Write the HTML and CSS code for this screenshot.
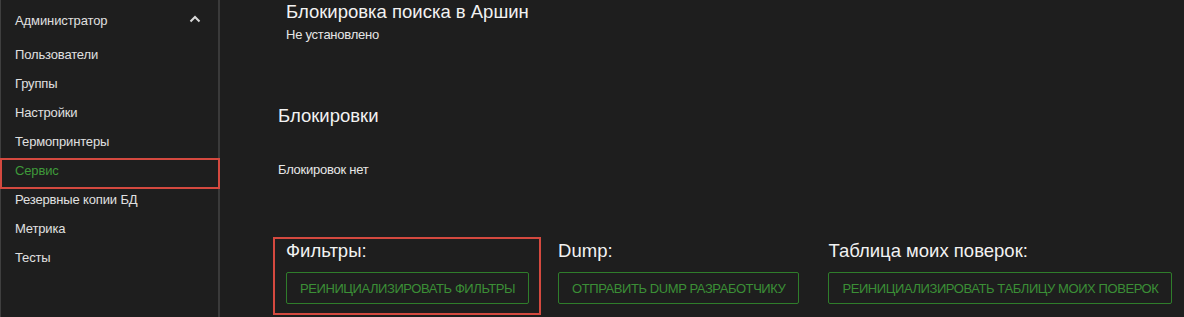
FILE: index.html
```html
<!DOCTYPE html>
<html lang="ru">
<head>
<meta charset="utf-8">
<link rel="stylesheet" href="styles.css">
</head>
<body>
<div class="layout">
  <aside class="sidebar">
    <div class="group-head">
      <span>Администратор</span>
      <svg class="chev" width="12" height="8" viewBox="0 0 12 8"><path d="M1.5 6.5 L6 2 L10.5 6.5" fill="none" stroke="#d8d8d8" stroke-width="2"/></svg>
    </div>
    <nav class="menu">
      <div class="item">Пользователи</div>
      <div class="item">Группы</div>
      <div class="item">Настройки</div>
      <div class="item">Термопринтеры</div>
      <div class="item active">Сервис</div>
      <div class="item">Резервные копии БД</div>
      <div class="item">Метрика</div>
      <div class="item">Тесты</div>
    </nav>
    <div class="mark mark-menu"></div>
  </aside>
  <main class="main">
    <section class="arshin">
      <h2 class="title">Блокировка поиска в Аршин</h2>
      <div class="text">Не установлено</div>
    </section>
    <section class="locks">
      <h2 class="title">Блокировки</h2>
      <div class="text">Блокировок нет</div>
    </section>
    <section class="actions">
      <div class="action">
        <h3 class="atitle">Фильтры:</h3>
        <button class="btn">Реинициализировать фильтры</button>
        <div class="mark mark-filters"></div>
      </div>
      <div class="action">
        <h3 class="atitle">Dump:</h3>
        <button class="btn">Отправить dump разработчику</button>
      </div>
      <div class="action">
        <h3 class="atitle">Таблица моих поверок:</h3>
        <button class="btn">Реинициализировать таблицу моих поверок</button>
      </div>
    </section>
  </main>
</div>
</body>
</html>
```
FILE: styles.css
```css
html, body {
  margin: 0;
  padding: 0;
  background: #1e1e1e;
  height: 317px;
  overflow: hidden;
  font-family: "Liberation Sans", Arial, sans-serif;
  color: #e6e6e6;
}
.layout {
  display: flex;
  height: 317px;
}
.sidebar {
  position: relative;
  width: 217px;
  flex: none;
  border-left: 1px solid #3f3f3f;
  border-right: 2px solid #3a3a3a;
  background: #1e1e1e;
}
.group-head {
  display: flex;
  align-items: center;
  justify-content: space-between;
  height: 40px;
  padding: 0 17px 0 14px;
  font-size: 13px;
  color: #e0e0e0;
  letter-spacing: -0.1px;
}
.chev { margin-top: -2px; }
.menu {
  display: flex;
  flex-direction: column;
}
.item {
  height: 29px;
  line-height: 16px;
  padding: 7px 14px 6px;
  box-sizing: border-box;
  font-size: 13px;
  color: #e0e0e0;
  letter-spacing: -0.15px;
}
.item.active {
  color: #3f9a3a;
}
.mark {
  position: absolute;
  border: 2px solid #d4493f;
  box-sizing: border-box;
  pointer-events: none;
}
.mark-menu {
  left: -1px;
  top: 158px;
  width: 220px;
  height: 31px;
}
.main {
  flex: 1;
  padding-left: 58px;
  padding-top: 1px;
}
.title {
  margin: 0;
  font-weight: normal;
  font-size: 18.5px;
  line-height: 22px;
  color: #f2f2f2;
}
.text {
  font-size: 13px;
  line-height: 16px;
  color: #e6e6e6;
  letter-spacing: -0.25px;
}
.arshin {
  padding-left: 8px;
}
.arshin .text { margin-top: 4px; }
.locks { margin-top: 62px; }
.locks .text { margin-top: 35px; }
.actions {
  display: flex;
  gap: 29px;
  margin-top: 62px;
  padding-left: 8px;
}
.action {
  position: relative;
  display: flex;
  flex-direction: column;
  align-items: flex-start;
}
.mark-filters {
  left: -13px;
  top: -3px;
  width: 268px;
  height: 78px;
}
.atitle {
  margin: 0 0 10px;
  font-weight: normal;
  font-size: 18.5px;
  line-height: 22px;
  color: #f2f2f2;
}
.btn {
  background: transparent;
  border: 1px solid #2f7d2b;
  border-radius: 2px;
  color: #3b8f36;
  font-family: "Liberation Sans", Arial, sans-serif;
  font-size: 13px;
  text-transform: uppercase;
  height: 32px;
  padding: 0 13px;
  letter-spacing: -0.42px;
}
```
